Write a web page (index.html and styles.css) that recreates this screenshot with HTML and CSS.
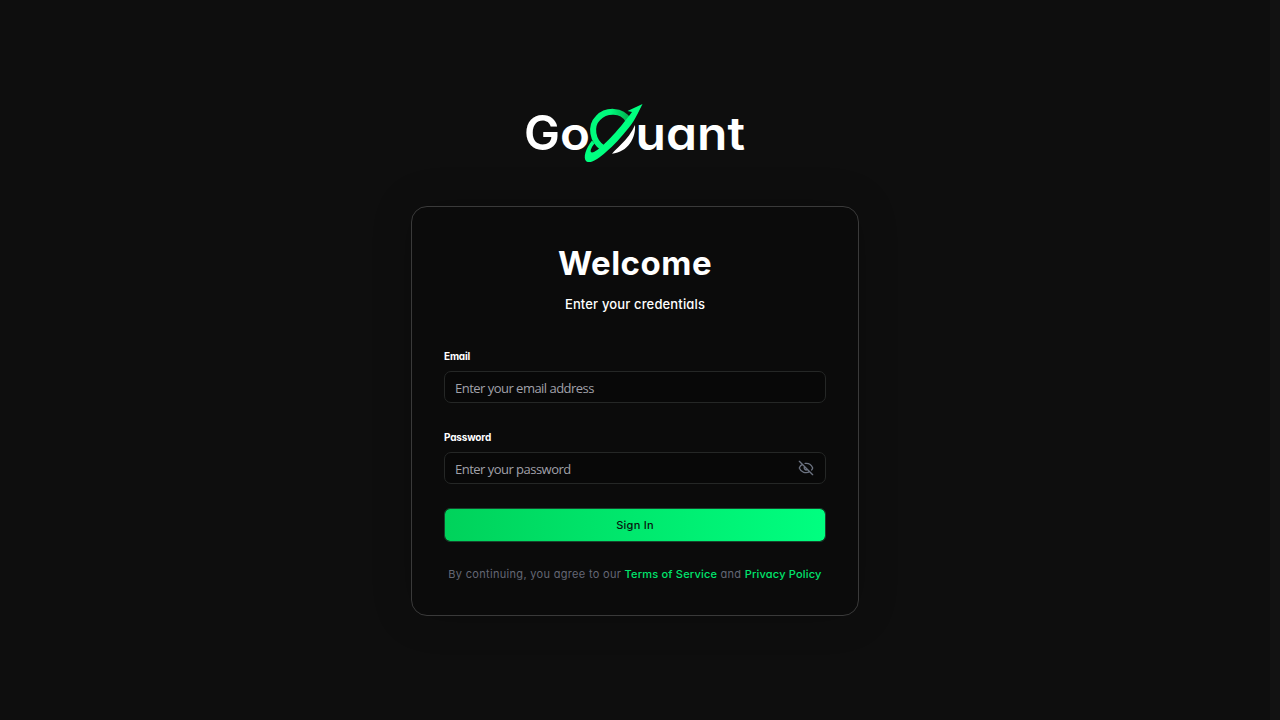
FILE: index.html
```html
<!DOCTYPE html>
<html lang="en">
<head>
<meta charset="utf-8">
<title>GoQuant</title>
<link rel="stylesheet" href="styles.css">
</head>
<body>
<main class="page">
  <svg class="logo" viewBox="0 0 240 75" role="img" aria-label="GoQuant">
    <defs>
      <linearGradient id="ring" x1="0" y1="0" x2="1" y2="0">
        <stop offset=".5" stop-color="#00fa7c"/>
        <stop offset="1" stop-color="#00b451"/>
      </linearGradient>
    </defs>
    <text class="wordmark wordmark-cap" x="9" y="55" textLength="36" lengthAdjust="spacingAndGlyphs">G</text>
    <text class="wordmark" x="45" y="55" textLength="30" lengthAdjust="spacingAndGlyphs">o</text>
    <text class="wordmark" x="120.500" y="55" textLength="109.500" lengthAdjust="spacingAndGlyphs">uant</text>
    <path fill="#fff" d="M120 30C121 43 113 57 97 58.700C99 56 102 53.500 105 50.500C112 44 117 37 120 30Z"/>
    <path fill="none" stroke="url(#ring)" stroke-width="6" d="M88 53C77 46 75 31 83 23C91 14.500 107 14.500 113 25"/>
    <path fill="#00ff80" d="M127.500 9L122.500 19C120 24 117.500 28 114 32.500C106 42.500 99 50 91 57C84 63.500 76 69 71.500 66.500C67.500 63 71 53 77 45.500L79.500 48.500C75 54 74 59 79 57C87 53 102 37 117 17L112.500 16Z"/>
  </svg>
  <form class="card">
    <h1 class="title">Welcome</h1>
    <p class="subtitle">Enter your credentials</p>
    <label class="label" for="email">Email</label>
    <div class="field"><input class="input" id="email" type="email" placeholder="Enter your email address"></div>
    <label class="label" for="password">Password</label>
    <div class="field">
      <input class="input" id="password" type="password" placeholder="Enter your password">
      <svg class="eye" viewBox="0 0 24 24"><path d="M10.700 5.100A10.700 10.700 0 0 1 21.900 11.700a1 1 0 0 1 0 .7 10.700 10.700 0 0 1-1.400 2.500M14.100 14.200a3 3 0 0 1-4.200-4.200M17.500 17.500A10.700 10.700 0 0 1 2.100 12.300a1 1 0 0 1 0-.7 10.700 10.700 0 0 1 4.400-5.100M2 2l20 20"/></svg>
    </div>
    <button class="submit" type="button">Sign In</button>
    <p class="terms"><span class="muted">By continuing, you agree to our</span> <a class="link">Terms of Service</a> <span class="muted">and</span> <a class="link">Privacy Policy</a></p>
  </form>
</main>
<div class="gutter"></div>
</body>
</html>
```
FILE: styles.css
```css
* { box-sizing: border-box; }
body {
  margin: 0;
  height: 720px;
  display: flex;
  overflow: hidden;
  background: #0e0e0e;
  color: #fff;
  font-family: Inter, "Liberation Sans", sans-serif;
  font-feature-settings: "cv11" 1;
}
.page {
  flex: 1;
  display: flex;
  flex-direction: column;
  align-items: center;
  padding-top: 95px;
}
.gutter { width: 10px; background: #121212; }
.logo { width: 240px; height: 75px; margin-bottom: 36px; overflow: visible; }
.wordmark { font-size: 46px; font-weight: 600; fill: #fff; }
.wordmark-cap { font-size: 48px; }
.card {
  width: 448px;
  height: 410px;
  padding: 36px 32px 0;
  border: 1px solid #3a3a3a;
  border-radius: 16px;
  background: #0b0b0b;
  box-shadow: 0 0 40px rgba(0, 0, 0, .2);
}
.title {
  margin: 0;
  text-align: center;
  font-size: 33px;
  line-height: 40px;
  font-weight: 700;
  letter-spacing: .5px;
}
.subtitle {
  margin: 11px 0 33px;
  text-align: center;
  font-size: 13px;
  line-height: 20px;
  font-weight: 500;
  letter-spacing: .15px;
}
.label {
  display: block;
  height: 24px;
  font-size: 10px;
  line-height: 18px;
  font-weight: 700;
  letter-spacing: -.18px;
}
.field {
  display: flex;
  align-items: center;
  height: 32px;
  margin-bottom: 25px;
  padding: 0 11px 0 10px;
  border: 1px solid #252726;
  border-radius: 7px;
  background: #080808;
}
.input {
  flex: 1;
  min-width: 0;
  padding: 2px 0 0;
  border: 0;
  outline: 0;
  background: transparent;
  color: #fff;
  font: 13px "Open Sans", sans-serif;
  letter-spacing: -.52px;
}
.input::placeholder { color: #a1a1aa; opacity: 1; }
.eye {
  width: 16px;
  height: 16px;
  fill: none;
  stroke: #6b7280;
  stroke-width: 2;
  stroke-linecap: round;
  stroke-linejoin: round;
}
.submit {
  display: block;
  width: 100%;
  height: 34px;
  margin-top: -1px;
  padding: 0;
  border: 1px solid #17452d;
  border-radius: 6px;
  background: linear-gradient(90deg, #00d25b, #00ff80) padding-box;
  color: #07140c;
  font: 500 11px Inter, sans-serif;
  letter-spacing: .25px;
}
.terms {
  margin: 23px 0 0;
  text-align: center;
  white-space: nowrap;
  font-size: 11px;
  line-height: 18px;
  letter-spacing: .2px;
}
.muted { color: #646775; letter-spacing: .31px; }
.link { color: #00e56d; font-weight: 500; }
```
